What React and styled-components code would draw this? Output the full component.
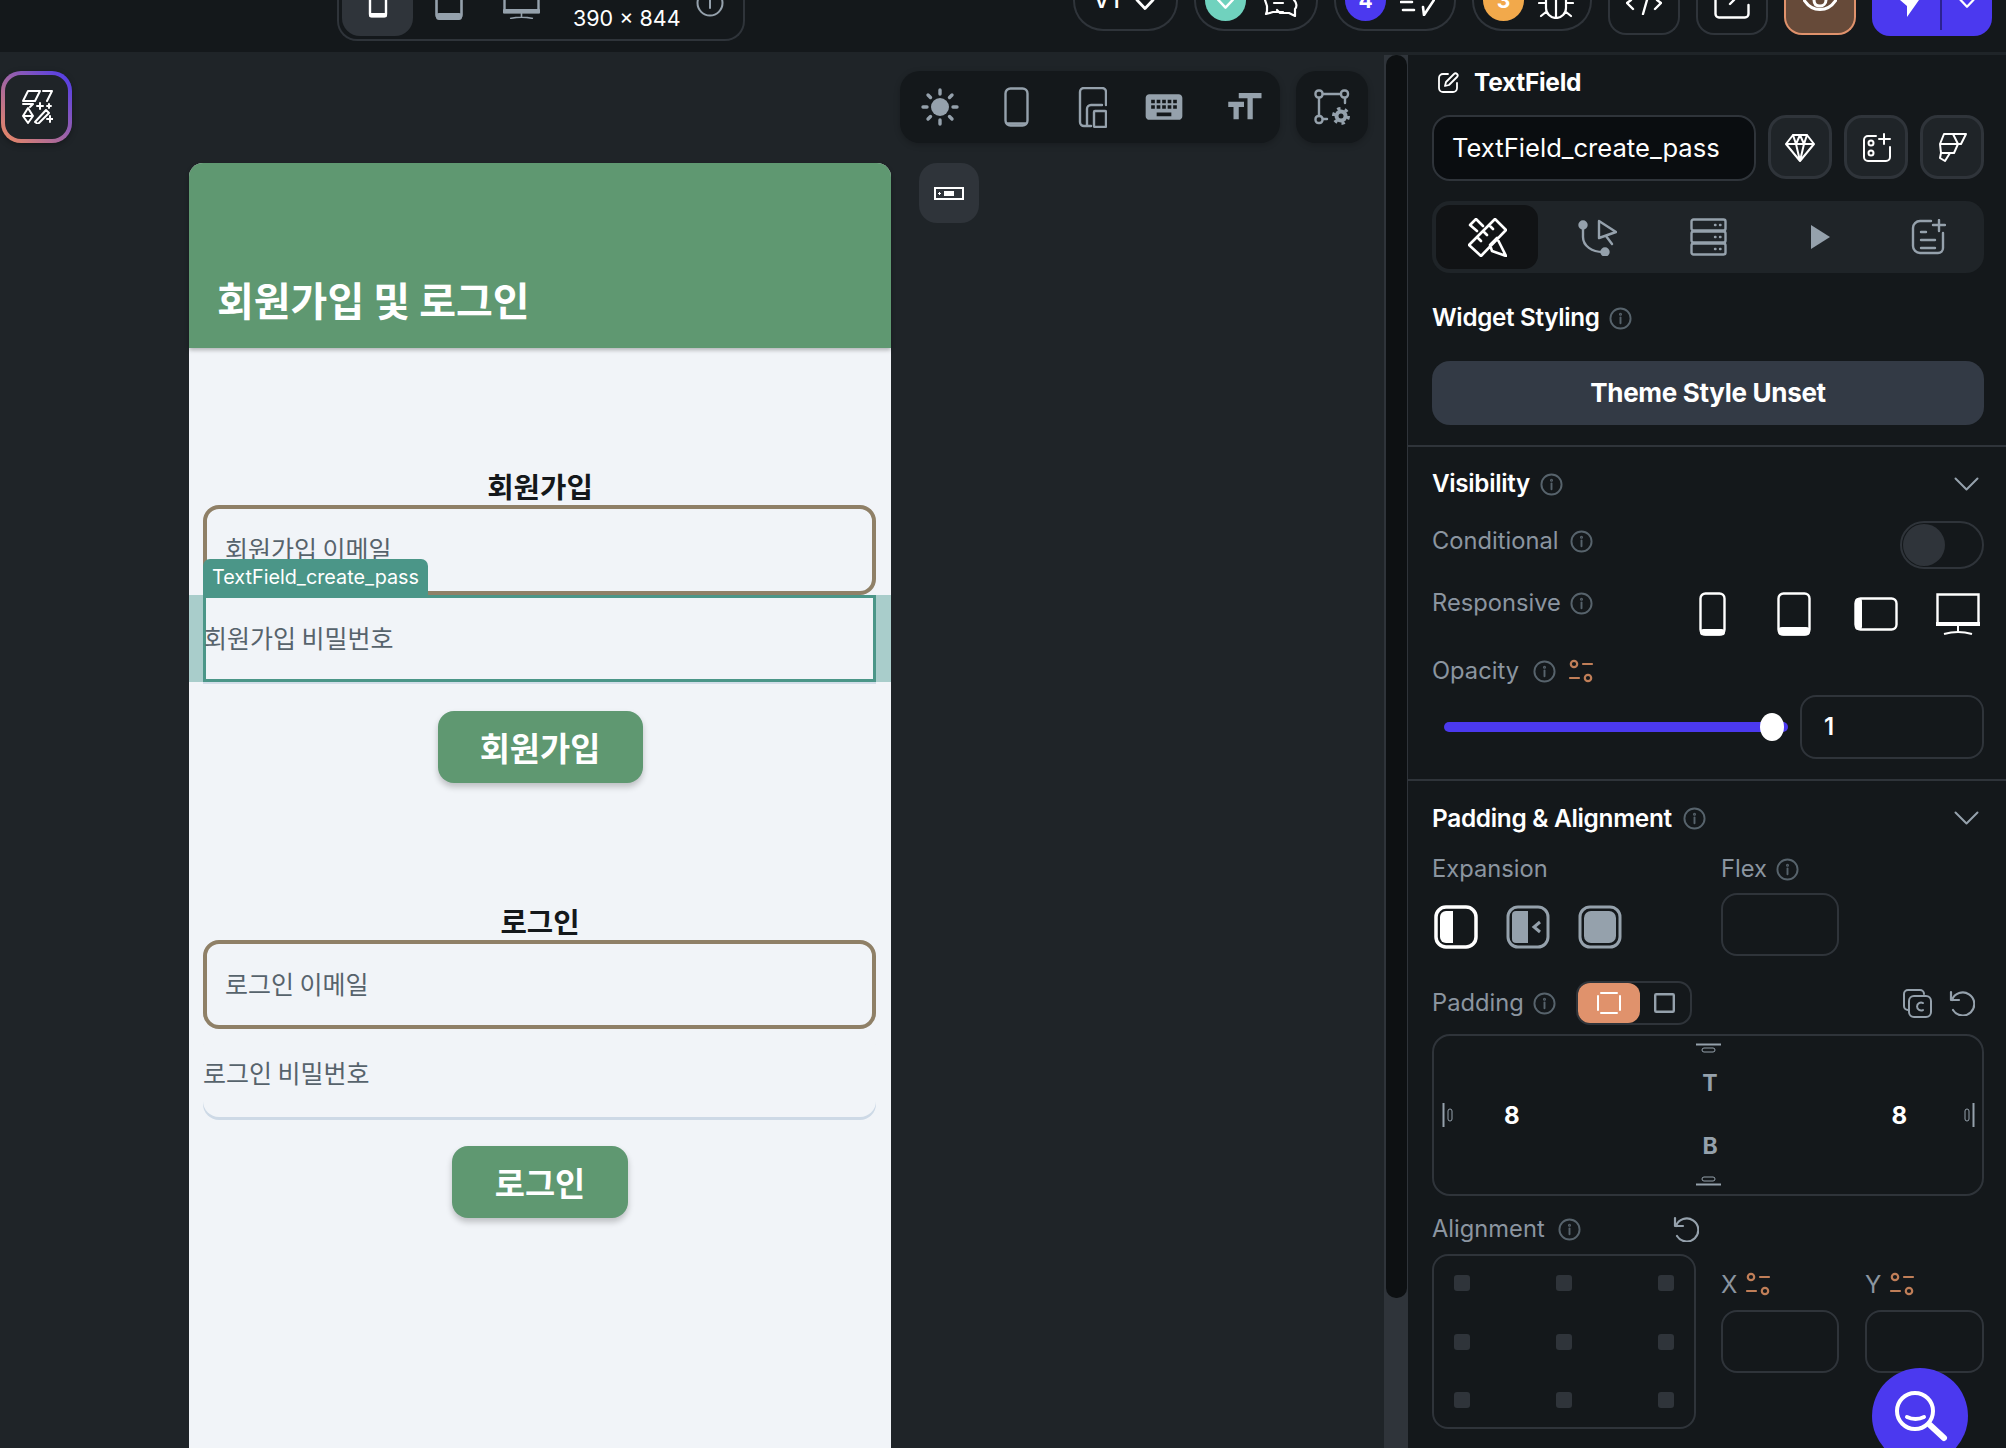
import React from 'react';
import styled, { createGlobalStyle } from 'styled-components';
import { MdKeyboard, MdFormatSize } from 'react-icons/md';

const UI = `Inter, "Noto Sans", sans-serif`;
const KR = `"Noto Sans CJK KR", "Noto Sans", sans-serif`;
const C = { dark: '#14181b', canvas: '#1f2428', line: '#2f343a', gray: '#8b95a0', icon: '#95a1ac', info: '#57636c', blue: '#4b39ef', orange: '#ee8b60', tan: '#c07e58', green: '#5f9871', teal: '#4b9688', page: '#f1f4f8', brown: '#8f8067' };

const Global = createGlobalStyle`
  html, body { margin: 0; padding: 0; background: ${C.canvas}; overflow: hidden; }
  #root { width: 100vw; height: 100vh; }
  svg { display: block; flex-shrink: 0; }
`;

const Root = styled.div`position: relative; width: 2006px; height: 1448px; overflow: hidden; background: ${C.canvas}; font-family: ${UI}; color: #fff; display: flex; flex-direction: column;`;

/* top bar */
const TopBar = styled.header`height: 52px; flex: none; background: ${C.dark}; display: flex; align-items: flex-start; padding: 0 14px 0 337px; box-sizing: border-box;`;
const DeviceBar = styled.div`width: 408px; height: 41px; box-sizing: border-box; border: 2px solid ${C.line}; border-top: 0; border-radius: 0 0 20px 20px; display: flex; align-items: flex-start; padding-left: 3px; overflow: hidden;`;
const DeviceTab = styled.div`height: 36px; width: ${p => p.$w}px; flex: none; display: flex; justify-content: center; background: ${p => p.$active ? C.line : 'transparent'}; border-radius: 0 0 18px 18px;`;
const SizeText = styled.span`font-size: 21.5px; line-height: 36px; margin-left: 16px; width: 116px; font-weight: 400; white-space: nowrap;`;
const TopRight = styled.div`margin-left: auto; display: flex; gap: 16px; align-items: flex-start;`;
const Pill = styled.div`height: 31px; width: ${p => p.$w}px; box-sizing: border-box; border: 2px solid ${C.line}; border-top: 0; border-radius: 0 0 30px 30px; display: flex; align-items: flex-end; overflow: hidden; padding-left: ${p => p.$pl}px; gap: ${p => p.$gap}px;`;
const Badge = styled.div`width: 41px; height: 41px; flex: none; margin-bottom: 8px; border-radius: 50%; background: ${p => p.$bg}; display: flex; align-items: center; justify-content: center; font-size: 21px; font-weight: 700; color: #fff; position: relative;`;
const BadgeGlyph = styled.div`margin-top: 8px;`;
const Lift = styled.div`margin-bottom: ${p => p.$b}px; flex: none; display: flex; align-items: flex-end;`;
const Version = styled.span`font-size: 24px; line-height: 20px; height: 10px; font-weight: 500; display: flex; align-items: flex-end;`;
const SquareBtn = styled.div`width: 72px; height: 35px; box-sizing: border-box; border: 2px solid ${p => p.$on ? '#e0926c' : C.line}; border-top: 0; border-radius: 0 0 18px 18px; background: ${p => p.$on ? '#664a39' : 'transparent'}; display: flex; justify-content: center; align-items: flex-start;`;
const Deploy = styled.div`width: 120px; height: 36px; background: ${C.blue}; border-radius: 0 0 18px 18px; display: flex; align-items: flex-start;`;
const DeploySide = styled.div`height: 30px; display: flex; justify-content: center; width: ${p => p.$w}px; padding-left: ${p => p.$pl || 0}px; border-right: ${p => p.$div ? '2px solid #2b2290' : '0'}; box-sizing: border-box;`;

/* body */
const Body = styled.div`flex: 1; min-height: 0; display: flex;`;
const Canvas = styled.main`width: 1384px; flex: none; display: grid; grid-template-columns: 189px 702px 1fr; overflow: hidden;`;
const LeftRail = styled.div`padding: 19px 0 0 1px;`;
const AiBtn = styled.div`width: 71px; height: 72px; box-sizing: border-box; border-radius: 20px; padding: 4px; background: linear-gradient(to top right, ${C.orange}, ${C.blue}); box-shadow: 0 2px 6px rgba(0,0,0,.3);`;
const AiInner = styled.div`width: 100%; height: 100%; border-radius: 16px; background: ${C.canvas}; display: flex; align-items: center; justify-content: center;`;

const Device = styled.section`margin-top: 111px; background: ${C.page}; border-radius: 14px 14px 0 0; height: 1285px; display: flex; flex-direction: column;`;
const AppBar = styled.div`height: 185px; flex: none; background: ${C.green}; border-radius: 14px 14px 0 0; box-shadow: 0 2px 4px rgba(0,0,0,.28); display: flex; align-items: flex-end; padding: 0 0 26px 28px; box-sizing: border-box; position: relative; z-index: 1;`;
const AppTitle = styled.h1`margin: 0; font: 600 40px/46px ${KR}; color: #fff;`;
const Form = styled.div`display: flex; flex-direction: column; align-items: center;`;
const FormTitle = styled.h2`margin: 121px 0 2px; width: 100%; text-align: center; font: 600 28.7px/33px ${KR}; color: #14181b;`;
const Field = styled.div`box-sizing: border-box; align-self: stretch; margin: 1px 15px 0 14px; height: ${p => p.$h}px; border: ${p => p.$plain ? '0' : `4px solid ${C.brown}`}; border-radius: 16px; display: flex; align-items: center; padding: 0 0 ${p => p.$pb || 0}px ${p => p.$plain ? 0 : 18}px; font: 400 25px/30px ${KR}; color: ${C.info}; box-shadow: ${p => p.$plain ? '0 3px 0 #cdd9e6' : 'none'};`;
const SelectedRow = styled.div`align-self: stretch; height: 87px; background: #a9cdcb; padding: 0 15px 0 14px; position: relative;`;
const SelectTag = styled.div`position: absolute; left: 14px; bottom: 100%; height: 36px; width: 225px; box-sizing: border-box; padding-left: 9px; background: ${C.teal}; border-radius: 7px 7px 0 0; color: #fff; font: 400 19.8px/37px ${UI}; white-space: nowrap; z-index: 2;`;
const SelectedField = styled.div`height: 87px; box-sizing: border-box; border: 3px solid ${C.teal}; background: ${C.page}; box-shadow: 0 2px 0 #d3dee9; display: flex; align-items: center; font: 400 25px/30px ${KR}; color: ${C.info}; padding-bottom: 3px; text-indent: -2px;`;
const GreenBtn = styled.div`margin-top: ${p => p.$mt}px; width: ${p => p.$w}px; height: 72px; border-radius: 16px; background: ${C.green}; color: #fff; font: 600 32.8px/72px ${KR}; text-align: center; box-shadow: 0 4px 6px rgba(0,0,0,.22);`;

const Tools = styled.div`padding: 19px 0 0 9px; display: flex; flex-direction: column;`;
const ToolRow = styled.div`display: flex; gap: 16px;`;
const ToolBox = styled.div`height: 72px; width: ${p => p.$w}px; border-radius: 20px; background: ${C.dark}; color: ${C.icon}; box-shadow: 0 2px 6px rgba(0,0,0,.22); display: grid; grid-template-columns: ${p => p.$cols}; align-items: center; justify-items: center;`;
const WidgetBtn = styled.div`margin: 20px 0 0 19px; width: 60px; height: 60px; border-radius: 18px; background: ${C.line}; display: flex; align-items: center; justify-content: center;`;

const Track = styled.div`width: 24px; flex: none; margin-top: 3px; background: ${C.line}; padding: 0 1px 0 2px; box-sizing: border-box;`;
const Thumb = styled.div`height: 1243px; background: #0d1012; border-radius: 10px;`;

/* panel */
const Panel = styled.aside`flex: 1; margin-top: 3px; background: ${C.dark}; overflow: hidden;`;
const Section = styled.div`padding: ${p => p.$pt}px 22px ${p => p.$pb}px 24px; border-bottom: ${p => p.$line ? `2px solid ${C.line}` : '0'};`;
const Row = styled.div`display: flex; align-items: ${p => p.$align || 'center'}; margin-top: ${p => p.$mt || 0}px; height: ${p => p.$h}px; gap: ${p => p.$gap || 0}px;`;
const TitleIcon = styled.span`margin-left: 5px;`;
const WidgetName = styled.div`font-size: 24.5px; font-weight: 700; letter-spacing: -.3px; margin-left: 15px;`;
const NameInput = styled.div`width: 324px; height: 66px; box-sizing: border-box; border: 2px solid ${C.line}; border-radius: 18px; background: #0a0d10; padding-left: 18px; font-size: 25.6px; line-height: 62px; white-space: nowrap; color: #fff;`;
const IconBtn = styled.div`width: 64px; height: 64px; box-sizing: border-box; border: 3px solid ${C.line}; border-radius: 18px; background: ${C.canvas}; display: flex; align-items: center; justify-content: center;`;
const Tabs = styled.div`margin-top: 20px; height: 72px; background: ${C.canvas}; border-radius: 18px; display: grid; grid-template-columns: 102px 119px 102px 123px 92px; padding: 4px; box-sizing: border-box; color: ${C.icon};`;
const Tab = styled.div`display: flex; align-items: center; justify-content: center; border-radius: 14px; background: ${p => p.$on ? '#111315' : 'transparent'}; color: ${p => p.$on ? '#fff' : 'inherit'};`;
const Heading = styled.span`font-size: ${p => p.$s || 24.2}px; font-weight: 600; letter-spacing: -.3px; line-height: 28px; white-space: nowrap;`;
const Label = styled.span`font-size: 23.7px; font-weight: 400; color: ${C.gray}; line-height: ${p => p.$lh || 28}px; white-space: nowrap;`;
const InfoSlot = styled.span`margin-left: ${p => p.$ml || 9}px; margin-top: ${p => p.$mt || 0}px; flex: none;`;
const Push = styled.div`margin-left: auto; margin-right: ${p => p.$mr || 0}px; display: flex; align-items: center; gap: ${p => p.$gap || 0}px; padding-right: ${p => p.$pr || 0}px;`;
const ThemeBtn = styled.div`margin-top: 29px; height: 64px; border-radius: 18px; background: #333a45; text-align: center; font-size: 26px; line-height: 64px; font-weight: 700; letter-spacing: -.3px;`;
const Toggle = styled.div`margin-left: auto; width: 84px; height: 48px; box-sizing: border-box; border: 2px solid ${C.line}; border-radius: 24px; padding: 1px;`;
const ToggleKnob = styled.div`width: 42px; height: 42px; border-radius: 50%; background: ${C.line};`;
const RespGrid = styled.div`margin-left: auto; margin-right: -15px; display: grid; grid-template-columns: repeat(4, 82px); justify-items: center; align-items: center; height: 44px;`;
const SliderBox = styled.div`width: 344px; margin-left: 12px; height: 10px; background: ${C.blue}; border-radius: 5px; position: relative;`;
const SliderThumb = styled.div`position: absolute; right: 4px; top: -9px; width: 24px; height: 28px; border-radius: 50%; background: #fff;`;
const TextBox = styled.div`width: ${p => p.$w}px; height: ${p => p.$h}px; margin-left: ${p => p.$ml || 0}px; margin-top: ${p => p.$mt || 0}px; box-sizing: border-box; border: 2px solid ${C.line}; border-radius: 16px; padding-left: 22px; font-size: 24px; font-weight: 600; line-height: 60px;`;
const ExpRow = styled.div`margin-top: 23px; display: grid; grid-template-columns: 289px 1fr; height: 101px;`;
const ExpIcons = styled.div`margin-top: 22px; display: flex; gap: 28px; padding-left: 2px;`;
const Segment = styled.div`margin-left: 20px; width: 116px; height: 44px; box-sizing: border-box; border: 2px solid ${C.line}; border-radius: 14px; display: grid; grid-template-columns: 62px 1fr; align-items: center; justify-items: center;`;
const SegOn = styled.div`width: 62px; height: 40px; background: #e0926c; border-radius: 12px; display: flex; align-items: center; justify-content: center;`;
const PadBox = styled.div`margin-top: 9px; height: 162px; box-sizing: border-box; border: 2px solid ${C.line}; border-radius: 18px; display: grid; grid-template-rows: 24px 45px 20px 42px 27px; justify-items: center; align-items: center;`;
const PadLetter = styled.span`font-size: 23px; font-weight: 700; color: ${C.icon}; margin-left: 4px;`;
const PadMiddle = styled.div`justify-self: stretch; display: flex; align-items: center; padding: 0 7px 0 8px;`;
const PadNum = styled.span`font-size: 24px; font-weight: 700; color: #fff; margin: ${p => p.$m};`;
const AlignRow = styled.div`margin-top: 19px; display: flex; gap: 25px;`;
const AlignLeft = styled.div`width: 264px; flex: none;`;
const AlignGrid = styled.div`margin-top: 11px; height: 175px; box-sizing: border-box; border: 2px solid ${C.line}; border-radius: 16px; padding: 19px 20px; display: grid; grid-template-columns: repeat(3, 16px); grid-template-rows: repeat(3, 16px); justify-content: space-between; align-content: space-between;`;
const Dot = styled.div`background: ${C.line}; border-radius: 3px;`;
const XYCols = styled.div`padding-top: 55px; display: flex; gap: 26px;`;
const XYLabel = styled.div`display: flex; align-items: center; gap: 8px; height: 28px; color: ${C.gray}; font-size: 24px;`;
const Fab = styled.div`position: absolute; left: 1872px; top: 1368px; width: 96px; height: 96px; border-radius: 50%; background: ${C.blue};`;

/* icons */
const S = ({ w, h, vb, c = 'currentColor', sw = 2, children }) => (
  <svg width={w} height={h} viewBox={vb || `0 0 ${w} ${h}`} fill="none" stroke={c} strokeWidth={sw} strokeLinecap="round" strokeLinejoin="round">{children}</svg>
);
const Info = ({ c = C.info, size = 23 }) => (
  <S w={size} h={size} vb="0 0 24 24" c={c}><circle cx="12" cy="12" r="10.5" /><path d="M12 11v6" /><circle cx="12" cy="7.5" r=".6" /></S>
);
const Chevron = () => <S w={25} h={14} c={C.icon}><path d="M1.5 1.5 12.5 12.5 23.5 1.5" /></S>;
const Sliders = () => (
  <S w={26} h={24} c={C.tan} sw={2.2}><circle cx="6" cy="5" r="3.2" /><path d="M15 5h9M2 19h9" /><circle cx="20" cy="19" r="3.2" /></S>
);
const PenBox = () => (
  <S w={22} h={22} c="#fff" sw={1.8}><path d="M11 3H6a4 4 0 0 0-4 4v10a4 4 0 0 0 4 4h10a4 4 0 0 0 4-4v-5" /><path d="M8 15l1-4 8-8a2 2 0 0 1 3 3l-8 8z" /></S>
);
const Gem = () => (
  <S w={30} h={29} c="#fff" sw={2}><path d="M8 2h14l7 9-14 17L1 11zM1 11h28M8 2l3 9 4 17 4-17 3-9M11 11l4-9 4 9" /></S>
);
const AddVar = () => (
  <S w={29} h={29} c="#fff" sw={2}><path d="M14 3H6a4 4 0 0 0-4 4v17a4 4 0 0 0 4 4h18a4 4 0 0 0 4-4V14" /><circle cx="9" cy="10" r="2.5" /><circle cx="9" cy="20" r="2.5" /><path d="M22 1v10M17 6h11" /></S>
);
const FlowLogo = () => (
  <S w={29} h={29} c="#fff" sw={2}><path d="M6 1H28L23 11H2ZM15 1l5 10M2 11H20L16 20H3ZM3 20H12L7 28 2 25Z" /></S>
);
const RulerPen = () => (
  <S w={39} h={39} c="#fff" sw={2.6}><path d="M27 1l11 11-25 26L1 27zM9 19l4 4M15 13l4 4M21 7l4 4M9 13L2 7l6-6 7 7M22 27l7-7 9 18-14-5z" /></S>
);
const FlowIcon = () => (
  <S w={39} h={37} sw={2.4}><circle cx="5" cy="6" r="3.5" fill="currentColor" /><circle cx="27" cy="33" r="3.5" fill="currentColor" /><path d="M5 9v9c0 9 9 15 20 15M21 2l17 11-17 6zM28 17l6 8" /></S>
);
const Server = () => (
  <S w={37} h={38} sw={2.4}><rect x="1.5" y="1.5" width="34" height="11" rx="2" /><rect x="1.5" y="13.5" width="34" height="11" rx="2" /><rect x="1.5" y="25.5" width="34" height="11" rx="2" /><path d="M25 7h.5M30 7h.5M25 19h.5M30 19h.5M25 31h.5M30 31h.5" /></S>
);
const Play = () => <svg width="19" height="24" viewBox="0 0 19 24" fill="currentColor"><path d="M0 0l19 12L0 24z" /></svg>;
const NotePlus = () => (
  <S w={35} h={36} sw={2.4}><path d="M20 2H9a7 7 0 0 0-7 7v18a7 7 0 0 0 7 7h18a5 5 0 0 0 5-5V14M10 13h5M10 21h14M10 29h14M28 1v11M22 6h12" /></S>
);
const Sun = () => (
  <S w={38} h={38} sw={3.4}><circle cx="19" cy="19" r="9" fill="currentColor" stroke="none" /><path d="M19 2v4M19 32v4M2 19h4M32 19h4M7 7l2.5 2.5M28.5 28.5L31 31M7 31l2.5-2.5M28.5 9.5L31 7" /></S>
);
const PhoneTool = () => (
  <S w={25} h={40} sw={2.4}><rect x="1.5" y="1.5" width="22" height="37" rx="5" /><path d="M3 36.500h19" /></S>
);
const DevicesTool = () => (
  <S w={29} h={41} sw={2.4}><path d="M8 39H6a4 4 0 0 1-4-4V5a4 4 0 0 1 4-4h18a4 4 0 0 1 4 4v13M9 39V22a4 4 0 0 1 4-4h11M17 24h10a1 1 0 0 1 1 1v14a1 1 0 0 1-1 1H17a1 1 0 0 1-1-1V25a1 1 0 0 1 1-1zM9 39h4" /></S>
);
const NodeGear = () => (
  <S w={36} h={36} sw={2.4}>
    <rect x="1.5" y="1.5" width="7" height="7" rx="3" /><rect x="27" y="1.5" width="7" height="7" rx="3" /><rect x="1.5" y="27" width="7" height="7" rx="3" /><path d="M9 5h18M5 9v18M31 9v5M9 30h4" />
    <circle cx="27" cy="27" r="6.500" fill="currentColor" stroke="none" />
    <circle cx="27" cy="27" r="7.500" strokeWidth="3" strokeDasharray="3.400 4.400" strokeLinecap="butt" />
    <circle cx="27" cy="27" r="2.500" fill={C.dark} stroke="none" />
  </S>
);
const WidgetIcon = () => (
  <svg width="30" height="13" viewBox="0 0 30 13" fill="none"><rect x="1" y="1" width="28" height="11" stroke="#fff" strokeWidth="2" /><rect x="10" y="4" width="10" height="5" fill="#fff" /><path d="M4 6.500h3M5.500 5v3" stroke="#fff" /></svg>
);
const AiIcon = () => (
  <S w={32} h={34} c="#fff" sw={2}><path d="M7 1H19L14 11H2ZM22 1H31L26 11M2 14H12L9 17M7 18L2 26 7 33 12 26ZM2 26H12" /><path d="M14 32L25 20 28 23 17 34ZM19 13v6M16 16h6M29 26v6M26 29h6M28 14v4M26 16h4" /></S>
);
const PhoneTop = ({ c }) => (
  <svg width="20" height="18" viewBox="0 0 20 18" fill="none"><path d="M2 0v14a2 2 0 0 0 2 2h12a2 2 0 0 0 2-2V0" stroke={c} strokeWidth="2.400" /><rect x="1" y="13" width="18" height="4.500" rx="2" fill={c} /></svg>
);
const TabletTop = ({ c }) => (
  <svg width="28" height="20" viewBox="0 0 28 20" fill="none"><path d="M1.500 0v15a3 3 0 0 0 3 3h19a3 3 0 0 0 3-3V0" stroke={c} strokeWidth="2.600" /><rect x="1" y="13" width="26" height="7" rx="3" fill={c} /></svg>
);
const DesktopTop = ({ c }) => (
  <svg width="37" height="19" viewBox="0 0 37 19" fill="none"><path d="M1.500 0v12h34V0" stroke={c} strokeWidth="2.400" /><rect x="0" y="9" width="37" height="4.500" rx="1" fill={c} /><path d="M18.500 13v4M7 18.500c7-1.500 16-1.500 23 0" stroke={c} strokeWidth="1.600" /></svg>
);
const RespPhone = () => (
  <svg width="27" height="44" viewBox="0 0 27 44" fill="none"><rect x="1.500" y="1.500" width="24" height="41" rx="5" stroke="#fff" strokeWidth="2.400" /><rect x="1" y="37" width="25" height="6.500" rx="3.500" fill="#fff" /></svg>
);
const RespTablet = () => (
  <svg width="34" height="44" viewBox="0 0 34 44" fill="none"><rect x="1.500" y="1.500" width="31" height="41" rx="5" stroke="#fff" strokeWidth="2.400" /><rect x="1" y="35" width="32" height="8.500" rx="4" fill="#fff" /></svg>
);
const RespLand = () => (
  <svg width="44" height="34" viewBox="0 0 44 34" fill="none"><rect x="1.500" y="1.500" width="41" height="31" rx="5" stroke="#fff" strokeWidth="2.400" /><rect x="1" y="1" width="7" height="32" rx="3.500" fill="#fff" /></svg>
);
const RespDesk = () => (
  <svg width="44" height="42" viewBox="0 0 44 42" fill="none"><path d="M1.500 1.500h41v30h-41z" stroke="#fff" strokeWidth="2.400" /><rect x="0" y="29" width="44" height="4" fill="#fff" /><path d="M22 33v5M8 41c9-2.500 19-2.500 28 0" stroke="#fff" strokeWidth="2" /></svg>
);
const ExpA = () => (
  <svg width="44" height="44" viewBox="0 0 44 44" fill="none"><rect x="2" y="2" width="40" height="40" rx="10" stroke="#fff" strokeWidth="3.500" /><path d="M12 6h7v32h-7a6 6 0 0 1-6-6V12a6 6 0 0 1 6-6z" fill="#fff" /></svg>
);
const ExpB = () => (
  <svg width="44" height="44" viewBox="0 0 44 44" fill="none"><rect x="2" y="2" width="40" height="40" rx="10" stroke={C.icon} strokeWidth="3" /><path d="M10 6h12v32H10a4 4 0 0 1-4-4V10a4 4 0 0 1 4-4z" fill={C.icon} /><path d="M34 17l-6 5 6 5" stroke={C.icon} strokeWidth="3" /></svg>
);
const ExpC = () => (
  <svg width="44" height="44" viewBox="0 0 44 44" fill="none"><rect x="2" y="2" width="40" height="40" rx="10" stroke={C.icon} strokeWidth="3" /><rect x="6" y="6" width="32" height="32" rx="7" fill={C.icon} /></svg>
);
const PadAll = () => (
  <S w={24} h={22} c="#fff" sw={2}><path d="M4 1h16M4 21h16M1 4v14M23 4v14" /></S>
);
const PadOne = () => <S w={21} h={20} c={C.icon} sw={2.400}><rect x="1.200" y="1.200" width="18.600" height="17.600" rx="1" /></S>;
const Copy = () => (
  <S w={30} h={30} c={C.icon} sw={2}><path d="M6 22a4 4 0 0 1-4-4V6a4 4 0 0 1 4-4h12a4 4 0 0 1 4 4" /><rect x="7" y="8" width="22" height="21" rx="5" /><path d="M21 15a4 4 0 1 0 0 7" /></S>
);
const Reset = () => (
  <S w={26} h={26} c={C.icon} sw={2.200}><path d="M2 2v8h8" /><path d="M3 10a11.500 11.500 0 1 1 1 10" /></S>
);
const EdgeTop = ({ flip }) => (
  <svg width="25" height="10" viewBox="0 0 25 10" fill="none">{flip
    ? <><rect x="6" y="1" width="13" height="4" rx="2" stroke={C.icon} /><path d="M0 8.500h25" stroke={C.icon} strokeWidth="2" /></>
    : <><path d="M0 1.500h25" stroke={C.icon} strokeWidth="2" /><rect x="6" y="5" width="13" height="4" rx="2" stroke={C.icon} /></>}</svg>
);
const EdgeSide = ({ flip }) => (
  <svg width="11" height="24" viewBox="0 0 11 24" fill="none">{flip
    ? <><rect x="1" y="6" width="4" height="12" rx="2" stroke={C.icon} /><path d="M9.500 0v24" stroke={C.icon} strokeWidth="2" /></>
    : <><path d="M1.500 0v24" stroke={C.icon} strokeWidth="2" /><rect x="6" y="6" width="4" height="12" rx="2" stroke={C.icon} /></>}</svg>
);
const DownTop = ({ w = 20, h = 10 }) => <S w={w} h={h} vb="0 0 20 10" c="#fff" sw={2.800}><path d="M2 0l8 8.500L18 0" /></S>;
const Comment = () => (
  <S w={35} h={17} c="#fff" sw={2.200}><path d="M1 0l2 6v5l-1 3 7-2h10" /><path d="M10 3h9" /><path d="M30 0c3 3 3 7 1 9v7l-6-3H16l-3-3" /></S>
);
const BoltLines = () => (
  <S w={35} h={16} c="#fff" sw={2.600}><path d="M1 2h11M3 10h11M34 0l-10 15-1-8" /></S>
);
const Bug = () => (
  <S w={36} h={19} c="#fff" sw={2.200}><path d="M8 0v8a10 10 0 0 0 20 0V0M18 0v17M1 3h7M28 3h7M3 16l5-4M33 16l-5-4" /></S>
);
const CodeIcon = () => (
  <S w={36} h={15} c="#fff" sw={2.400}><path d="M5 0L1 3l6 6M31 0l4 3-6 6M21 0l-4 14" /></S>
);
const ExportIcon = () => (
  <S w={36} h={19} c="#fff" sw={2.400}><path d="M1.500 0v14a3.500 3.500 0 0 0 3.500 3.500h26a3.500 3.500 0 0 0 3.500-3.500V5M16 4l4-4" /></S>
);
const Eye = () => (
  <S w={34} h={11} c="#fff" sw={3}><path d="M1 0c4 6 10 9.500 16 9.500S29 6 33 0M11 0c0 5 3 6 6 6s6-2 6-6" /></S>
);
const Bolt = () => <svg width="19" height="17" viewBox="0 0 19 17" fill="#fff"><path d="M0 0H19L7 17 7 6Z" /></svg>;
const Smile = () => (
  <S w={96} h={96} c="#fff" sw={4}><circle cx="43" cy="43" r="18" /><path d="M35 49c5 2.500 12 2.500 17 0" /><path d="M58 57l14 13" strokeWidth="6" /></S>
);

const Signup = () => (
  <>
    <FormTitle>회원가입</FormTitle>
    <Field $h={90} $pb={4}>회원가입 이메일</Field>
    <SelectedRow>
      <SelectTag>TextField_create_pass</SelectTag>
      <SelectedField>회원가입 비밀번호</SelectedField>
    </SelectedRow>
    <GreenBtn $mt={29} $w={205}>회원가입</GreenBtn>
  </>
);

const Login = () => (
  <>
    <FormTitle>로그인</FormTitle>
    <Field $h={89} $pb={3}>로그인 이메일</Field>
    <Field $plain $h={87} $pb={4}>로그인 비밀번호</Field>
    <GreenBtn $mt={29} $w={176}>로그인</GreenBtn>
  </>
);

export default function App() {
  return (
    <Root>
      <Global />
      <TopBar>
        <DeviceBar>
          <DeviceTab $w={71} $active><PhoneTop c="#fff" /></DeviceTab>
          <DeviceTab $w={72}><TabletTop c={C.icon} /></DeviceTab>
          <DeviceTab $w={72}><DesktopTop c={C.icon} /></DeviceTab>
          <SizeText>390 × 844</SizeText>
          <DeviceTab $w={42}><S w={28} h={17} c={C.icon} sw={2}><circle cx="14" cy="3" r="12.500" /><path d="M14 0v8" /></S></DeviceTab>
        </DeviceBar>
        <TopRight>
          <Pill $w={105} $pl={18} $gap={15}><Lift $b={19}><Version>V1</Version></Lift><Lift $b={19}><DownTop /></Lift></Pill>
          <Pill $w={124} $pl={9} $gap={18}>
            <Badge $bg="#70d2be"><BadgeGlyph><DownTop w={19} h={9} /></BadgeGlyph></Badge>
            <Lift $b={12}><Comment /></Lift>
          </Pill>
          <Pill $w={122} $pl={9} $gap={14}><Badge $bg={C.blue}>4</Badge><Lift $b={13}><BoltLines /></Lift></Pill>
          <Pill $w={120} $pl={9} $gap={14}><Badge $bg="#f2a94b">3</Badge><Lift $b={10}><Bug /></Lift></Pill>
          <SquareBtn><CodeIcon /></SquareBtn>
          <SquareBtn><ExportIcon /></SquareBtn>
          <SquareBtn $on><Eye /></SquareBtn>
          <Deploy>
            <DeploySide $w={70} $pl={7} $div><Bolt /></DeploySide>
            <DeploySide $w={50}><DownTop w={16} h={8} /></DeploySide>
          </Deploy>
        </TopRight>
      </TopBar>
      <Body>
        <Canvas>
          <LeftRail><AiBtn><AiInner><AiIcon /></AiInner></AiBtn></LeftRail>
          <Device>
            <AppBar><AppTitle>회원가입 및 로그인</AppTitle></AppBar>
            <Form>
              <Signup />
              <Login />
            </Form>
          </Device>
          <Tools>
            <ToolRow>
              <ToolBox $w={380} $cols="80px 72px 80px 64px 96px">
                <Sun /><PhoneTool /><DevicesTool /><MdKeyboard size={44} /><MdFormatSize size={42} />
              </ToolBox>
              <ToolBox $w={72} $cols="1fr"><NodeGear /></ToolBox>
            </ToolRow>
            <WidgetBtn><WidgetIcon /></WidgetBtn>
          </Tools>
        </Canvas>
        <Track><Thumb /></Track>
        <Panel>
          <Section $pt={14} $pb={20} $line>
            <Row $h={26}><TitleIcon><PenBox /></TitleIcon><WidgetName>TextField</WidgetName></Row>
            <Row $mt={20} $h={66} $align="flex-start" $gap={12}>
              <NameInput>TextField_create_pass</NameInput>
              <IconBtn><Gem /></IconBtn>
              <IconBtn><AddVar /></IconBtn>
              <IconBtn><FlowLogo /></IconBtn>
            </Row>
            <Tabs>
              <Tab $on><RulerPen /></Tab>
              <Tab><FlowIcon /></Tab>
              <Tab><Server /></Tab>
              <Tab><Play /></Tab>
              <Tab><NotePlus /></Tab>
            </Tabs>
            <Row $mt={31} $h={28}><Heading>Widget Styling</Heading><InfoSlot><Info /></InfoSlot></Row>
            <ThemeBtn>Theme Style Unset</ThemeBtn>
          </Section>
          <Section $pt={23} $pb={20} $line>
            <Row $h={28}><Heading>Visibility</Heading><InfoSlot $ml={10}><Info /></InfoSlot><Push $pr={5}><Chevron /></Push></Row>
            <Row $mt={23} $h={48} $align="flex-start">
              <Label $lh={40}>Conditional</Label><InfoSlot $ml={12} $mt={9}><Info /></InfoSlot>
              <Toggle><ToggleKnob /></Toggle>
            </Row>
            <Row $mt={23} $h={44} $align="flex-start">
              <Label $lh={22}>Responsive</Label><InfoSlot><Info /></InfoSlot>
              <RespGrid><RespPhone /><RespTablet /><RespLand /><RespDesk /></RespGrid>
            </Row>
            <Row $mt={21} $h={28}><Label>Opacity</Label><InfoSlot $ml={14}><Info /></InfoSlot><InfoSlot $ml={12}><Sliders /></InfoSlot></Row>
            <Row $mt={10} $h={64}>
              <SliderBox><SliderThumb /></SliderBox>
              <TextBox $w={184} $h={64} $ml={12}>1</TextBox>
            </Row>
          </Section>
          <Section $pt={23} $pb={0}>
            <Row $h={28}><Heading $s={24.4}>Padding &amp; Alignment</Heading><InfoSlot $ml={11}><Info /></InfoSlot><Push $pr={5}><Chevron /></Push></Row>
            <ExpRow>
              <div>
                <Row $h={28}><Label>Expansion</Label></Row>
                <ExpIcons><ExpA /><ExpB /><ExpC /></ExpIcons>
              </div>
              <div>
                <Row $h={28}><Label>Flex</Label><InfoSlot><Info /></InfoSlot></Row>
                <TextBox $w={118} $h={63} $mt={10} />
              </div>
            </ExpRow>
            <Row $mt={25} $h={44}>
              <Label>Padding</Label><InfoSlot><Info /></InfoSlot>
              <Segment><SegOn><PadAll /></SegOn><PadOne /></Segment>
              <Push $gap={17} $pr={9}><Copy /><Reset /></Push>
            </Row>
            <PadBox>
              <EdgeTop />
              <PadLetter>T</PadLetter>
              <PadMiddle>
                <EdgeSide />
                <PadNum $m="0 auto 0 51px">8</PadNum>
                <PadNum $m="0 57px 0 auto">8</PadNum>
                <EdgeSide flip />
              </PadMiddle>
              <PadLetter>B</PadLetter>
              <EdgeTop flip />
            </PadBox>
            <AlignRow>
              <AlignLeft>
                <Row $h={28}><Label>Alignment</Label><InfoSlot $ml={13}><Info /></InfoSlot><Push $mr={-3}><Reset /></Push></Row>
                <AlignGrid>{Array.from({ length: 9 }, (_, i) => <Dot key={i} />)}</AlignGrid>
              </AlignLeft>
              <XYCols>
                <div>
                  <XYLabel>X<Sliders /></XYLabel>
                  <TextBox $w={118} $h={63} $mt={12} />
                </div>
                <div>
                  <XYLabel>Y<Sliders /></XYLabel>
                  <TextBox $w={119} $h={63} $mt={12} />
                </div>
              </XYCols>
            </AlignRow>
          </Section>
        </Panel>
      </Body>
      <Fab><Smile /></Fab>
    </Root>
  );
}
